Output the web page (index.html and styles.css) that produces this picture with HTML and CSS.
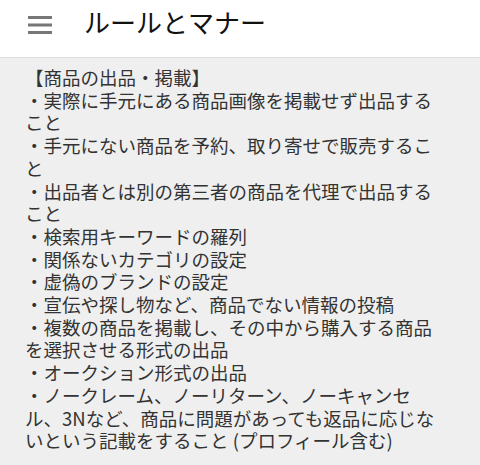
FILE: index.html
```html
<!DOCTYPE html>
<html lang="ja">
<head>
  <meta charset="UTF-8">
  <meta name="viewport" content="width=device-width, initial-scale=1.0">
  <title>ルールとマナー</title>
  <link rel="stylesheet" href="styles.css">
</head>
<body>

<header class="appbar">
  <span class="menu-icon">
    <svg width="24" height="18" viewBox="0 0 24 18">
      <rect x="0" y="0" width="24" height="3" fill="#777"/>
      <rect x="0" y="7.5" width="24" height="3" fill="#777"/>
      <rect x="0" y="15" width="24" height="3" fill="#777"/>
    </svg>
  </span>
  <h1>ルールとマナー</h1>
</header>

<div class="content">
  <p>【商品の出品・掲載】<br>
  ・実際に手元にある商品画像を掲載せず出品すること<br>
  ・手元にない商品を予約、取り寄せで販売すること<br>
  ・出品者とは別の第三者の商品を代理で出品すること<br>
  ・検索用キーワードの羅列<br>
  ・関係ないカテゴリの設定<br>
  ・虚偽のブランドの設定<br>
  ・宣伝や探し物など、商品でない情報の投稿<br>
  ・複数の商品を掲載し、その中から購入する商品を選択させる形式の出品<br>
  ・オークション形式の出品<br>
  ・ノークレーム、ノーリターン、ノーキャンセル、3Nなど、商品に問題があっても返品に応じないという記載をすること (プロフィール含む)</p>
</div>

</body>
</html>
```

FILE: styles.css
```css
body {
  margin: 0;
  padding: 0;
  background-color: #efefef;
  font-family: "Noto Sans CJK JP", "Noto Sans", sans-serif;
}
.appbar {
  background-color: white;
  height: 58px;
  border-bottom: 1px solid #dcdcdc;
  display: flex;
  align-items: center;
  padding-left: 28px;
  box-sizing: border-box;
}
.menu-icon {
  display: flex;
  margin-right: 32px;
  margin-top: -8px;
}
.appbar h1 {
  margin: 0;
  margin-top: -14px;
  font-size: 26px;
  font-weight: normal;
  color: #111;
}
.content {
  padding: 8px 40px 0 25px;
}
.content p {
  margin: 0;
  font-size: 18.5px;
  line-height: 22.7px;
  color: #333;
}
```
